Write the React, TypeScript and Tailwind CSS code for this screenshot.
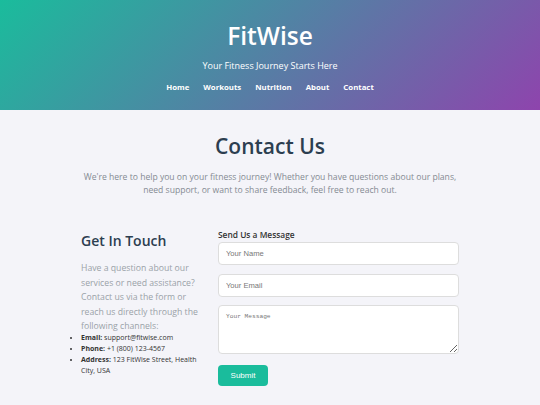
import React from "react";

const P = { fontFamily: '"Open Sans", "Noto Sans", sans-serif' };
const A = { fontFamily: '"Liberation Sans", Arial, sans-serif' };

export default function App() {
  return (
    <div className="min-h-[405px] bg-[#f4f4f9]" style={P}>
      <header className="h-[110px] bg-[linear-gradient(135deg,#1abc9c,#8e44ad)] flex flex-col items-center text-white">
        <h1 className="mt-[20px] text-[24.5px] leading-[32px] font-semibold">FitWise</h1>
        <p className="mt-[7px] text-[9px] leading-[13px]">Your Fitness Journey Starts Here</p>
        <nav className="mt-[9px] flex gap-[14px] text-[7.8px] font-bold leading-[12px]">
          <span>Home</span>
          <span>Workouts</span>
          <span>Nutrition</span>
          <span>About</span>
          <span>Contact</span>
        </nav>
      </header>
      <main className="flex flex-col items-center">
        <h2 className="mt-[22px] text-[21px] leading-[28px] font-semibold text-[#2c3e50]">Contact Us</h2>
        <p className="mt-[11px] w-[384px] text-center text-[8.6px] leading-[13px] text-[#858b93]">
          We're here to help you on your fitness journey! Whether you have questions about our plans, need support, or want to share feedback, feel free to reach out.
        </p>
        <div className="mt-[32px] w-[378px] flex gap-[17px]">
          <div className="w-[120px]">
            <h3 className="mt-[3px] text-[14px] leading-[18px] font-semibold text-[#2c3e50]">Get In Touch</h3>
            <p className="mt-[11px] text-[8.7px] leading-[14.5px] text-[#9aa2a8]">
              Have a question about our services or need assistance? Contact us via the form or reach us directly through the following channels:
            </p>
            <ul className="-mt-[2px] list-disc list-outside pl-0 text-[7px] leading-[11px] text-[#333]">
              <li><b>Email:</b> support@fitwise.com</li>
              <li><b>Phone:</b> +1 (800) 123-4567</li>
              <li><b>Address:</b> 123 FitWise Street, Health City, USA</li>
            </ul>
          </div>
          <div className="w-[241px] flex flex-col">
            <label className="text-[8.4px] leading-[12px] font-semibold text-[#333]">Send Us a Message</label>
            <input
              placeholder="Your Name"
              className="mt-[1px] h-[23px] bg-white border border-[#ddd] rounded-[4px] px-[7px] text-[7.6px] placeholder:text-[#777] outline-none"
              style={A}
            />
            <input
              placeholder="Your Email"
              className="mt-[9px] h-[23px] bg-white border border-[#ddd] rounded-[4px] px-[7px] text-[7.6px] placeholder:text-[#777] outline-none"
              style={A}
            />
            <textarea
              placeholder="Your Message"
              className="mt-[8px] h-[49px] bg-white border border-[#ddd] rounded-[4px] px-[7px] py-[6px] text-[6.2px] placeholder:text-[#777] outline-none resize-y"
              style={{ fontFamily: '"Liberation Mono", monospace' }}
            />
            <button
              className="mt-[11px] w-[50px] h-[21px] bg-[#1abc9c] text-white rounded-[4px] text-[8px]"
              style={A}
            >
              Submit
            </button>
          </div>
        </div>
      </main>
    </div>
  );
}
